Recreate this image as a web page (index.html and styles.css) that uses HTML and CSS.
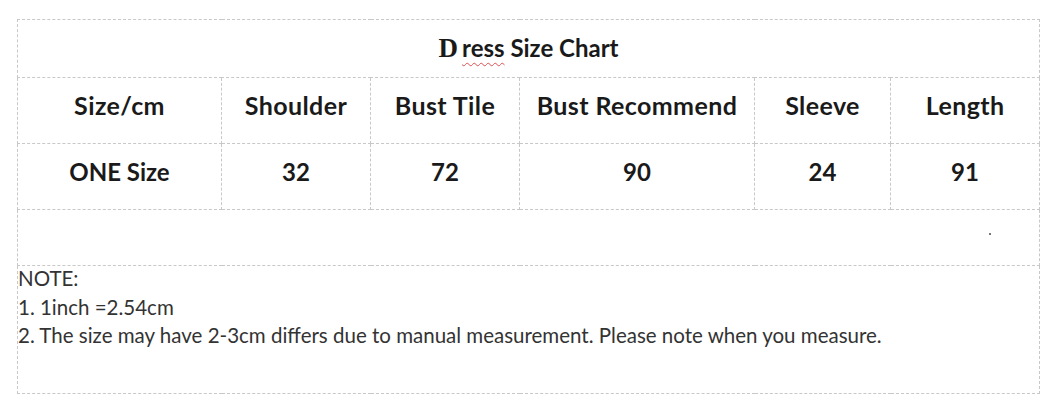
FILE: index.html
```html
<!DOCTYPE html>
<html lang="en">
<head>
<meta charset="utf-8">
<title>Dress Size Chart</title>
<link rel="stylesheet" href="styles.css">
</head>
<body>
<div class="page">
  <table class="chart">
    <colgroup>
      <col class="c1"><col class="c2"><col class="c3"><col class="c4"><col class="c5"><col class="c6">
    </colgroup>
    <tr class="row-title">
      <td colspan="6" class="title"><span class="title-d">D</span><span class="title-ress">ress</span> Size Chart</td>
    </tr>
    <tr class="row-head">
      <td>Size/cm</td><td>Shoulder</td><td>Bust Tile</td><td>Bust Recommend</td><td>Sleeve</td><td>Length</td>
    </tr>
    <tr class="row-data">
      <td>ONE Size</td><td>32</td><td>72</td><td>90</td><td>24</td><td>91</td>
    </tr>
    <tr class="row-empty">
      <td colspan="6" class="empty"><span class="dot"></span></td>
    </tr>
    <tr class="row-note">
      <td colspan="6" class="note">
        <p>NOTE:</p>
        <p>1. 1inch =2.54cm</p>
        <p>2. The size may have 2-3cm differs due to manual measurement. Please note when you measure.</p>
      </td>
    </tr>
  </table>
</div>
</body>
</html>
```

FILE: styles.css
```css
html, body {
  margin: 0;
  padding: 0;
  background: #ffffff;
}

.page {
  padding: 19px 0 0 17px;
}

.chart {
  border-collapse: collapse;
  table-layout: fixed;
  width: 1023px;
  font-family: Lato, "Open Sans", sans-serif;
  color: #1a1a1a;
}

.chart td {
  border: 1px dashed #c8c8c8;
  padding: 0;
  text-align: center;
  vertical-align: middle;
}

.c1 { width: 204px; }
.c2 { width: 149px; }
.c3 { width: 149px; }
.c4 { width: 235px; }
.c5 { width: 136px; }
.c6 { width: 149px; }

.row-title td { height: 57px; }
.row-head td {
  height: 53px;
  font-weight: 700;
  font-size: 25px;
  letter-spacing: 0.4px;
  padding-bottom: 12px;
}
.row-data td {
  height: 55px;
  font-weight: 700;
  font-size: 24px;
  padding-bottom: 10px;
}
.row-empty td { height: 55px; }
.row-note td { height: 127px; }

.title {
  font-weight: 700;
  font-size: 24px;
  padding-bottom: 4px;
  padding-left: 10px;
}

.title-d {
  font-family: "Liberation Serif", serif;
  font-size: 27px;
  margin-right: 4px;
}

.title-ress {
  text-decoration: underline wavy #e05050;
  text-decoration-thickness: 1px;
  text-underline-offset: 5px;
}

.empty {
  position: relative;
}

.dot {
  position: absolute;
  left: 971px;
  top: 23px;
  width: 2px;
  height: 2px;
  background: #777;
}

.chart td.note {
  text-align: left;
  vertical-align: top;
  padding-top: 0;
  font-size: 20.5px;
  color: #333;
}

.note p {
  margin: 0;
  line-height: 28.5px;
}

.note p:first-child {
  margin-top: -2px;
}
```
